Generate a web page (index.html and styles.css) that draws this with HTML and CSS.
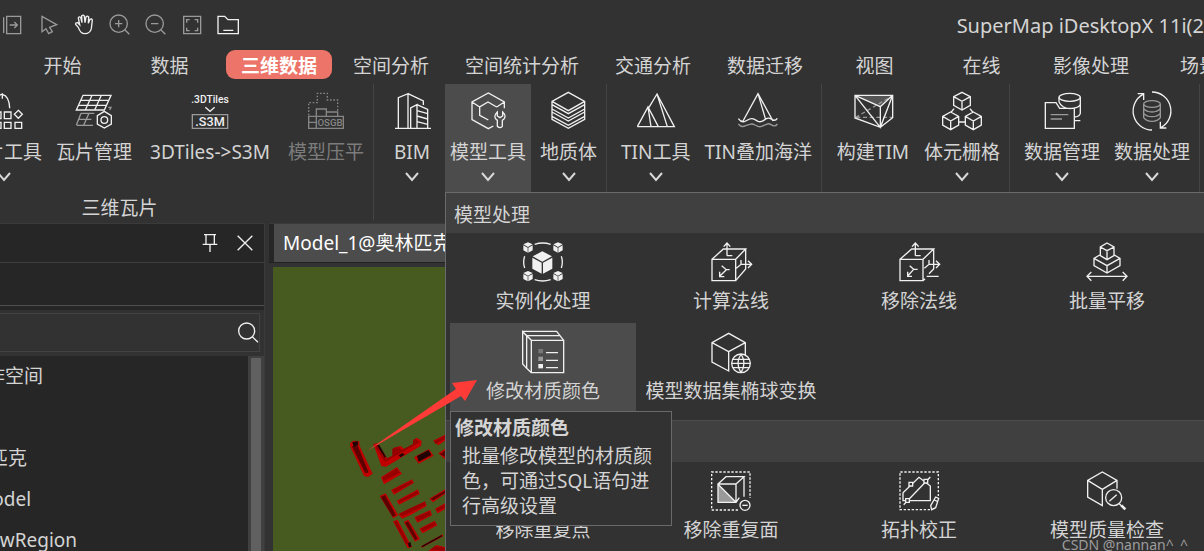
FILE: index.html
```html
<!DOCTYPE html>
<html lang="zh-CN">
<head>
<meta charset="utf-8">
<title>SuperMap iDesktopX</title>
<link rel="stylesheet" href="styles.css">
</head>
<body>
<div class="app">
  <header class="titlebar">
    <div class="quick">
      <button class="quick-btn dim" aria-label="导出"><svg viewBox="0 39 72 72"><path d="M11 52v47M20 49h42v52H20zM29 75h22M43 66l9 9-9 9"/></svg></button>
      <button class="quick-btn dim" aria-label="选择"><svg viewBox="108 39 72 72"><path d="M126 49v46l12-9 8 15 11-6-8-13 21-8z"/></svg></button>
      <button class="quick-btn" aria-label="漫游"><svg viewBox="216 39 72 72"><path d="M235 82l-8-9q-1-6 6-5l6 6-4-20q2-6 7-2l4 16-1-20q4-5 8 0l2 20 3-17q4-5 8 0l-1 19 5-12q5-3 7 2l-3 26q-4 15-19 15-14 0-20-19z"/></svg></button>
      <button class="quick-btn dim" aria-label="放大"><svg viewBox="324 39 72 72"><circle cx="356" cy="71" r="26"/><path d="M375 90l13 13M345 71h22M356 60v22"/></svg></button>
      <button class="quick-btn dim" aria-label="缩小"><svg viewBox="432 39 72 72"><circle cx="464" cy="71" r="26"/><path d="M483 90l13 13M453 71h22"/></svg></button>
      <button class="quick-btn dim" aria-label="全幅显示"><svg viewBox="540 39 72 72"><path d="M551 49h51v52h-51zM560 68v-9h9M584 59h9v9M593 83v9h-9M569 92h-9v-9"/></svg></button>
      <button class="quick-btn" aria-label="打开"><svg viewBox="648 39 72 72"><path d="M654 49h20l10 10h31v42h-61zM670 91h30"/></svg></button>
    </div>
    <div class="title">SuperMap iDesktopX 11i(2</div>
  </header>

  <nav class="tabs">
    <button class="tab">开始</button>
    <button class="tab">数据</button>
    <button class="tab selected">三维数据</button>
    <button class="tab">空间分析</button>
    <button class="tab">空间统计分析</button>
    <button class="tab">交通分析</button>
    <button class="tab">数据迁移</button>
    <button class="tab">视图</button>
    <button class="tab">在线</button>
    <button class="tab">影像处理</button>
    <button class="tab">场景</button>
  </nav>

  <section class="ribbon">
    <div class="group tiles">
      <div class="tools">
        <button class="tool"><svg class="icon" viewBox="-51 21 120 120"><path d="M-20 30v12M4 31q21 5 22 42M-6 34l10-4v14M10 84h20v20H10zM52 79l12 12-12 12-12-12zM10 115h20v18H10zM42 115h20v18H42zM-22 84H0v20h-22zM-22 115H0v18h-22z"/></svg><span>瓦片工具</span><svg class="chev" viewBox="0 0 16 12"><path d="M2 2l6 7 6-7"/></svg></button>
        <button class="tool"><svg class="icon" viewBox="219 21 120 120"><path d="M246 34h84l-20 44h-84zM273 34l-20 44M301 34l-20 44M239 49h84M232 64h84"/><path class="faint" d="M240 88h40M228 124h48M233 106h38M240 88l-14 36M264 88l-16 36M322 70h8l-4 8"/><path d="M310 82l21 13v25l-21 12-21-12V95z"/><circle cx="310" cy="108" r="10"/></svg><span>瓦片管理</span></button>
        <button class="tool long"><svg class="icon" viewBox="567 21 120 120"><text class="glyph" x="627" y="56" text-anchor="middle">.3DTiles</text><path d="M613 70l14 12 14-12"/><path class="faint" d="M574 92h106v41H574z"/><text class="glyph wide" x="627" y="125" text-anchor="middle">.S3M</text></svg><span>3DTiles-&gt;S3M</span></button>
        <button class="tool disabled" disabled><svg class="icon" viewBox="918 21 120 120"><path stroke-dasharray="5 5" d="M926 94V56h26V28h30v20h31v34"/><path d="M949 96V75h30v21M979 84h34v12M926 97h104v36H926zM949 97v36M926 115h23"/><text class="glyph" x="990" y="125" text-anchor="middle">OSGB</text></svg><span>模型压平</span></button>
      </div>
      <div class="group-name">三维瓦片</div>
    </div>
    <div class="group">
      <div class="tools">
        <button class="tool"><svg class="icon" viewBox="63 21 120 120"><path d="M72 133h108M82 133V41l29-12v104M111 29l46 22v12M119 133V72l19-10v71M138 62l32 14v57M138 80l32 9M138 96l32 9M138 113l32 8"/></svg><span>BIM</span><svg class="chev" viewBox="0 0 16 12"><path d="M2 2l6 7 6-7"/></svg></button>
        <button class="tool active"><svg class="icon" viewBox="294 21 120 120"><path d="M403 73V54l-48-27-49 27v53l49 27 15-8M306 54l23 15M403 54l-23 15M355 108l-26-14V69l25-15 26 15M382 84q-15 15 0 25v18q8 8 15 0v-18q16-10 1-25v12l-8 5-8-5z"/></svg><span>模型工具</span><svg class="chev" viewBox="0 0 16 12"><path d="M2 2l6 7 6-7"/></svg></button>
        <button class="tool"><svg class="icon" viewBox="536 21 120 120"><path d="M594 25l49 27v54l-49 27-49-27V52zM545 52l49 28 49-28M545 62l49 27 49-27M545 75l49 27 49-27M545 84l49 27 49-27M545 97l49 27 49-27"/></svg><span>地质体</span><svg class="chev" viewBox="0 0 16 12"><path d="M2 2l6 7 6-7"/></svg></button>
      </div>
    </div>
    <div class="group">
      <div class="tools">
        <button class="tool"><svg class="icon" viewBox="108 21 120 120"><path d="M112 128l32-59 31 59M144 69l9 59M147 70l24-40 52 98H112M171 30l31 98"/></svg><span>TIN工具</span><svg class="chev" viewBox="0 0 16 12"><path d="M2 2l6 7 6-7"/></svg></button>
        <button class="tool"><svg class="icon" viewBox="417 21 120 120"><path d="M432 111l45-82 45 82M477 29l23 78M418 104q10 14 22 7l12-6q8-3 16 2l9 5q8 3 16-2l9-6q8-4 14 1 12 8 19-2"/><path class="faint" d="M418 120q10 12 22 5l12-4q8-3 16 2l9 4q8 3 16-2l9-4q8-4 14 1 12 8 19-2"/></svg><span>TIN叠加海洋</span></button>
      </div>
    </div>
    <div class="group">
      <div class="tools">
        <button class="tool medium"><svg class="icon" viewBox="100 21 120 120"><path class="shade" d="M106 34h113l-37 34z"/><path class="faint" stroke-dasharray="12 8" d="M108 100l108-63M110 100h108"/><path d="M106 34h113v67l-37 29-76-28zM106 34l76 34 37-34M182 68v62M106 34l76 96 37-96"/></svg><span>构建TIM</span></button>
        <button class="tool"><svg class="icon" viewBox="369 21 120 120"><path d="M429 25l25 13v26l-25 14-25-14V38zM404 38l25 14 25-14M429 52v26M395 84l24 13v26l-24 14-24-14V97zM371 97l24 14 24-14M395 111v26M463 84l24 13v26l-24 14-24-14V97zM439 97l24 14 24-14M463 111v26M405 74l-8 10M453 74l8 10M419 114h20"/></svg><span>体元栅格</span><svg class="chev" viewBox="0 0 16 12"><path d="M2 2l6 7 6-7"/></svg></button>
      </div>
    </div>
    <div class="group">
      <div class="tools">
        <button class="tool"><svg class="icon" viewBox="667 21 120 120"><path d="M677 56h32l11 17h44v60h-87zM718 54V40M782 40v48q-3 10-18 11M718 54q8 18 32 20 30-3 32-13M764 110h18"/><ellipse cx="750" cy="40" rx="32" ry="12"/><path class="faint" d="M693 92h53M693 105h34"/></svg><span>数据管理</span><svg class="chev" viewBox="0 0 16 12"><path d="M2 2l6 7 6-7"/></svg></button>
        <button class="tool"><svg class="icon" viewBox="939 21 120 120"><path d="M999 24a57 57 0 0 1 27 107M1024 113v19h18M999 138a57 57 0 0 1-27-107M956 29h18v19"/><g class="faint"><ellipse cx="999" cy="60" rx="25" ry="10"/><path d="M974 60v41q8 11 25 11t25-11V60M974 74q8 10 25 10t25-10M974 88q8 10 25 10t25-10"/></g></svg><span>数据处理</span><svg class="chev" viewBox="0 0 16 12"><path d="M2 2l6 7 6-7"/></svg></button>
      </div>
    </div>
  </section>

  <main class="work">
    <aside class="panel">
      <div class="panel-head">
        <button class="panel-btn" aria-label="固定"><svg viewBox="600 36 60 60"><path d="M612 41h36M618 41v28M643 41v28M608 70h44M630 70v23"/></svg></button>
        <button class="panel-btn" aria-label="关闭"><svg viewBox="705 36 60 60"><path d="M713 44l44 44M757 44l-44 44"/></svg></button>
      </div>
      <div class="panel-bar"></div>
      <div class="search">
        <div class="search-box">
          <input type="search" aria-label="搜索">
          <svg viewBox="714 303 66 66"><circle cx="743" cy="330" r="24"/><path d="M760 347l17 17"/></svg>
        </div>
      </div>
      <div class="tree-wrap">
        <ul class="tree">
          <li class="lv0">工作空间</li>
          <li></li>
          <li class="lv1">奥林匹克</li>
          <li class="lv2">Model</li>
          <li class="lv2">NewRegion</li>
        </ul>
        <div class="track"><div class="thumb"></div></div>
      </div>
    </aside>
    <section class="view">
      <div class="view-tabs"><button class="view-tab">Model_1@奥林匹克</button></div>
      <div class="scene">
        <svg class="city" viewBox="9 141 516 852">
          <g class="side"><path d="M240 670l10-8 18 2 0 12 40 85-14 10-12-3-42-90z"/><path d="M310 672l12-2 30 45 20-10 0-22 20-5 12 10 25-15 0-12 12-8 14 10-2 14-105 63-14-2z"/><path d="M432 712l45-25 14 20-45 24z"/><path d="M333 772l48-31 15 20-54 32zM363 810l63-32 6 10-60 36zM380 842l64-34 5 14-62 32z"/><path d="M329 828l18-8 38 66-15 9zM385 882l80-38 5 14-50 28-24 10zM433 892l48-22 5 16-44 22zM448 926l46-24 8 14-44 24z"/><path d="M369 904l14-5 36 70 8 12-14 4zM401 905l14-6 35 58-15 8zM453 979l64-36 3 6-64 34z"/><path d="M489 662l36-18v18l-20 14zM505 700l20-14v32zM478 836l47-28v14l-36 25zM495 866l30-16v18l-22 12zM475 993l24-18 26 6v12z"/></g>
          <g class="roof"><path d="M314 678l8-3 25 42 20-9 0-22 17-6 12 10 33-18 0-12 8-3 12 10-104 58zM337 772l43-27 10 13-50 26zM367 810l57-28 4 7-54 29zM384 842l59-30 2 9-57 27zM387 882l27-14 51-23 2 10-70 34zM437 892l42-18 4 10-40 20zM452 926l42-21 4 9-39 20zM372 905l8-3 36 68-8 2z"/><path d="M492 663l33-16v10l-29 15zM498 866l27-13v10l-23 12zM480 990l16-12 28 5v10z"/></g>
          <g class="deep"><path d="M246 679l16-4 34 82-10 3zM332 831l13-6 33 61-10 4zM405 908l9-4 29 52-8 4zM482 836l43-24v7l-35 22zM509 702l16-10v18z"/></g>
          <g class="dark"><path d="M247 667l16-4 2 11-14 7zM441 708l35-18 8 15-38 20zM321 676l24 38 3-4-20-35zM386 706l12-7 6 5-13 8zM455 978l60-33 2 4-60 33zM413 970l9-4 2 14-7 2z"/></g>
        </svg>
      </div>
    </section>
  </main>

  <div class="menu">
    <h2 class="menu-head">模型处理</h2>
    <div class="menu-grid first">
      <button class="cell"><svg class="icon" viewBox="249 156 120 120"><path class="fill" d="M307 184l29 15-29 16-29-16zM277 203l28 15v33l-28-15zM337 203l-28 15v33l28-15z"/><path d="M284 163q24-8 48 0M284 269q24 8 48 0M254 199q-6 17 0 35M364 199q6 17 0 35"/><g class="fill"><path id="c" d="M264 157l14 6-14 8-14-8zM250 166l13 7v15l-13-7zM278 166l-13 7v15l13-7z"/><use href="#c" x="90"/><use href="#c" y="86"/><use href="#c" x="90" y="86"/></g></svg><span>实例化处理</span></button>
      <button class="cell"><svg class="icon" viewBox="813 156 120 120"><path d="M816 208h71v64h-71zM816 208l34-31h67l-30 31M917 177v60l-30 35M861 197v-37M851 170l10-11 10 11M861 197h16M845 227l14 12h10M859 239l-20 20M839 245v15h14M889 235l14-12h32M903 210v13M924 212l11 11-11 11"/></svg><span>计算法线</span></button>
      <button class="cell"><svg class="icon" viewBox="177 156 120 120"><path d="M180 208h69v64h-69zM180 208l35-31h66l-32 31M281 177v60l-14 14M249 272l6-6M226 197v-37M216 170l10-11 10 11M226 197h16M209 227l12 11h12M221 238l-18 20M203 245v14h13M253 235l14-12h32M267 210v13M288 212l11 11-11 11M260 259h36"/></svg><span>移除法线</span></button>
      <button class="cell"><svg class="icon" viewBox="741 156 120 120"><path d="M801 159l21 12v26l-21 12-20-12v-26zM781 171l20 11 21-11M801 182v26M779 195l-17 10v22l39 22 39-22v-22l-17-10M762 205l39 22 39-22M801 227v22M741 259h119M754 246l-13 13 13 13M848 246l13 13-13 13"/></svg><span>批量平移</span></button>
      <div class="cell-wrap">
        <button class="cell hover" aria-describedby="tip"><svg class="icon" viewBox="249 426 120 120"><path d="M274 451h97v97h-97zM274 451l-14-14v98l14 13M260 437l-12-12v97l12 13M248 424h102l21 27M260 437h100"/><path class="s1" d="M295 477h14v13h-14z"/><path class="s2" d="M295 500h14v13h-14z"/><path class="fill" d="M295 522h14v13h-14z"/><path d="M318 488h36M318 511h36M318 533h36"/></svg><span>修改材质颜色</span></button>
        <div class="tip" id="tip" role="tooltip"><strong>修改材质颜色</strong><p>批量修改模型的材质颜色，可通过SQL语句进行高级设置</p></div>
      </div>
      <button class="cell"><svg class="icon" viewBox="813 426 120 120"><path d="M916 495v-37l-50-28-50 28v58l50 27v-58l-50-27M866 485l50-27"/><circle cx="903" cy="520" r="28" class="base"/><path d="M875 520h56M878 508h50M878 533h50M903 492q-18 28 0 56M903 492q18 28 0 56"/></svg><span>模型数据集椭球变换</span></button>
    </div>
    <div class="menu-head ruled"></div>
    <div class="menu-grid">
      <button class="cell"><svg class="icon" viewBox="0 0 120 120"></svg><span>移除重复点</span></button>
      <button class="cell"><svg class="icon" viewBox="813 213 120 120"><path stroke-dasharray="7 5" d="M894 330h-79V216h115v78"/><path class="s2" d="M834 253l54 54h-54z"/><path d="M834 252h54v55h-54zM834 252l24-22h54l-24 22M912 230v60M834 253l54 54M888 307l10-14"/><circle class="base" cx="915" cy="316" r="15"/><path d="M907 316h16"/></svg><span>移除重复面</span></button>
      <button class="cell"><svg class="icon" viewBox="177 213 120 120"><path stroke-dasharray="7 5" d="M270 329h-90V216h115v72"/><path d="M189 302v-24l48-46 34 26v44zM191 314l80-83M287 291l9 4-9 28-12 6-3-12zM283 300l9 4"/><path class="base" d="M207 247h11v11h-11zM252 238h11v11h-11zM197 296h11v11h-11z"/></svg><span>拓扑校正</span></button>
      <button class="cell"><svg class="icon" viewBox="741 213 120 120"><path d="M831 266v-25l-44-25-44 25v50l44 26v-49l-44-27M787 268l44-27"/><circle class="base" cx="821" cy="293" r="24"/><path d="M808 304l22-20M838 311l6 6"/><path class="thick" d="M844 316l12 12"/></svg><span>模型质量检查</span></button>
    </div>
  </div>

  <svg class="arrow" viewBox="366 378 112 74"><path d="M367 451L456 389L452 383L477 380L465 401L461 396Z"/></svg>
  <div class="watermark">CSDN @nannan^_^</div>
</div>
</body>
</html>
```

FILE: styles.css
```css
* { box-sizing: border-box; }
body {
  margin: 0;
  background: #323232;
  color: #d4d4d4;
  font: 19px/24px "Noto Sans", "Noto Sans CJK SC", sans-serif;
  overflow: hidden;
}
button {
  font: inherit;
  color: inherit;
  background: none;
  border: 0;
  padding: 0;
  white-space: nowrap;
}
svg { fill: none; stroke: #f0f0f0; stroke-width: 4; overflow: visible; flex: none; }
.app { position: relative; min-height: 100vh; display: flex; flex-direction: column; overflow: hidden; }

.titlebar { display: flex; align-items: center; justify-content: space-between; height: 50px; }
.quick { display: flex; gap: 12px; }
.quick-btn { display: flex; }
.quick-btn svg { width: 24px; height: 24px; }
.quick-btn.dim svg { stroke: #9a9a9a; }
.title { white-space: nowrap; padding-top: 2px; font-size: 20px; }

.tabs { display: flex; gap: 6px; padding: 0 0 5px 12px; }
.tab { flex: none; min-width: 101px; height: 29px; padding: 3px 15px 0; border-radius: 9px; }
.tab:last-child { min-width: 0; margin-left: 15px; }
.tab.selected { background: #ec7468; color: #fff; font-weight: bold; }

.ribbon { display: flex; height: 139px; }
.group {
  flex: none;
  display: flex;
  flex-direction: column;
  justify-content: space-between;
  height: 136px;
  padding: 0 4px 0 9px;
  border-right: 1px solid #444;
}
.tiles { width: 509px; margin-left: -135px; }
.tiles .tools { justify-content: flex-end; }
.tools { display: flex; gap: 4px; }
.tool {
  display: flex;
  flex-direction: column;
  align-items: center;
  min-width: 58px;
  height: 108px;
  padding: 7px 5px 0;
}
.tool.long { min-width: 138px; }
.tool.medium { min-width: 84px; }
.tool.active { background: #4c4c4c; }
.tool.disabled { color: #7c7c7c; }
.tool.disabled svg { stroke: #858585; }
.tool span { margin-top: 9px; }
.icon { width: 40px; height: 40px; }
.chev { width: 16px; height: 12px; margin-top: 7px; stroke-width: 2; stroke: #d8d8d8; }
.faint { stroke: #9a9a9a; }
.shade { fill: #555; stroke: none; }
.fill { fill: #f0f0f0; stroke: none; }
.s1 { fill: #777; stroke: none; }
.s2 { fill: #999; stroke: none; }
.base { fill: #323232; }
.thick { stroke-width: 8; }
.glyph { font: 500 31px "Roboto", sans-serif; fill: #f0f0f0; stroke: none; }
.glyph.wide { font-size: 38px; }
.disabled .glyph { fill: #858585; font-size: 29px; }
.group-name { text-align: center; padding-right: 4px; }

.work { flex: 1; display: flex; }
.panel {
  flex: none;
  display: flex;
  flex-direction: column;
  width: 265px;
  background: #262626;
  border: solid #3a3a3a;
  border-width: 1px 1px 0 0;
}
.panel-head { display: flex; justify-content: flex-end; align-items: center; gap: 15px; height: 39px; padding-right: 9px; border-bottom: 1px solid #3e3e3e; }
.panel-btn { display: flex; }
.panel-btn svg { width: 20px; height: 20px; }
.panel-bar { height: 43px; border-bottom: 1px solid #505050; margin-bottom: 4px; }
.search { background: #323232; padding: 3px 4px 4px 0; }
.search-box { display: flex; align-items: center; height: 39px; border: 1px solid #424242; border-left: 0; }
.search-box input { flex: 1; min-width: 0; height: 100%; background: none; border: 0; color: inherit; font: inherit; outline: 0; }
.search-box svg { width: 22px; height: 22px; }
.tree-wrap { flex: 1; display: flex; justify-content: space-between; }
/* Scrolled sideways together with the panel. */
.tree { list-style: none; margin: 0 0 0 -60px; padding: 0; line-height: 41px; }
.tree li { height: 41px; }
.lv0 { padding-left: 27px; }
.lv1 { padding-left: 11px; }
.lv2 { padding-left: 35px; }
.track { width: 16px; padding: 2px 3px 0; background: #404040; display: flex; }
.thumb { flex: 1; background: #606060; }

.view { flex: 1; display: flex; flex-direction: column; margin-left: 4px; border-top: 1px solid #3a3a3a; }
.view-tabs { height: 39px; padding-left: 5px; background: #262626; border-bottom: 1px solid #222; }
.view-tab { height: 38px; padding: 0 9px; background: #4c4c4c; color: #fff; }
.scene { flex: 1; margin: 4px 0 0 4px; background: #475a20; }
.city { display: block; width: 172px; height: 284px; stroke: none; }
.side { fill: #c00000; }
.roof { fill: #960000; }
.deep { fill: #5c0000; }
.dark { fill: #220202; }

.menu {
  position: absolute;
  top: 192px;
  left: 445px;
  right: 0;
  bottom: 0;
  background: #323232;
  border: solid #6a6a6a;
  border-width: 1px 0 0 1px;
}
.menu-head { margin: 0; height: 40px; padding: 10px 8px 0; background: #404040; font-size: 19px; font-weight: normal; }
.menu-head.ruled { height: 42px; border-top: 1px solid #4c4c4c; }
.menu-grid { display: grid; grid-template-columns: repeat(4, minmax(0, 1fr)); gap: 0 2px; padding: 0 4px; }
.menu-grid.first { padding-bottom: 7px; }
.cell { display: flex; flex-direction: column; align-items: center; width: 100%; height: 90px; padding: 9px 0 0; }
.cell span { margin-top: 7px; }
.cell-wrap { position: relative; }
.cell.hover { background: #4c4c4c; }
.tip {
  position: absolute;
  z-index: 1;
  top: 88px;
  left: 0;
  width: 222px;
  padding: 4px 4px 6px;
  background: #323232;
  border: 1px solid #6a6a6a;
  line-height: 25px;
}
.tip strong { display: block; }
.tip p { margin: 3px 0 0; padding: 0 8px 0 7px; }

.arrow { position: absolute; left: 366px; top: 378px; width: 112px; height: 74px; stroke: none; fill: #ff3b38; z-index: 2; }
.watermark { position: absolute; right: 16px; bottom: 6px; font-size: 14px; line-height: 20px; color: #a8a8a8; opacity: 0.9; }
```
